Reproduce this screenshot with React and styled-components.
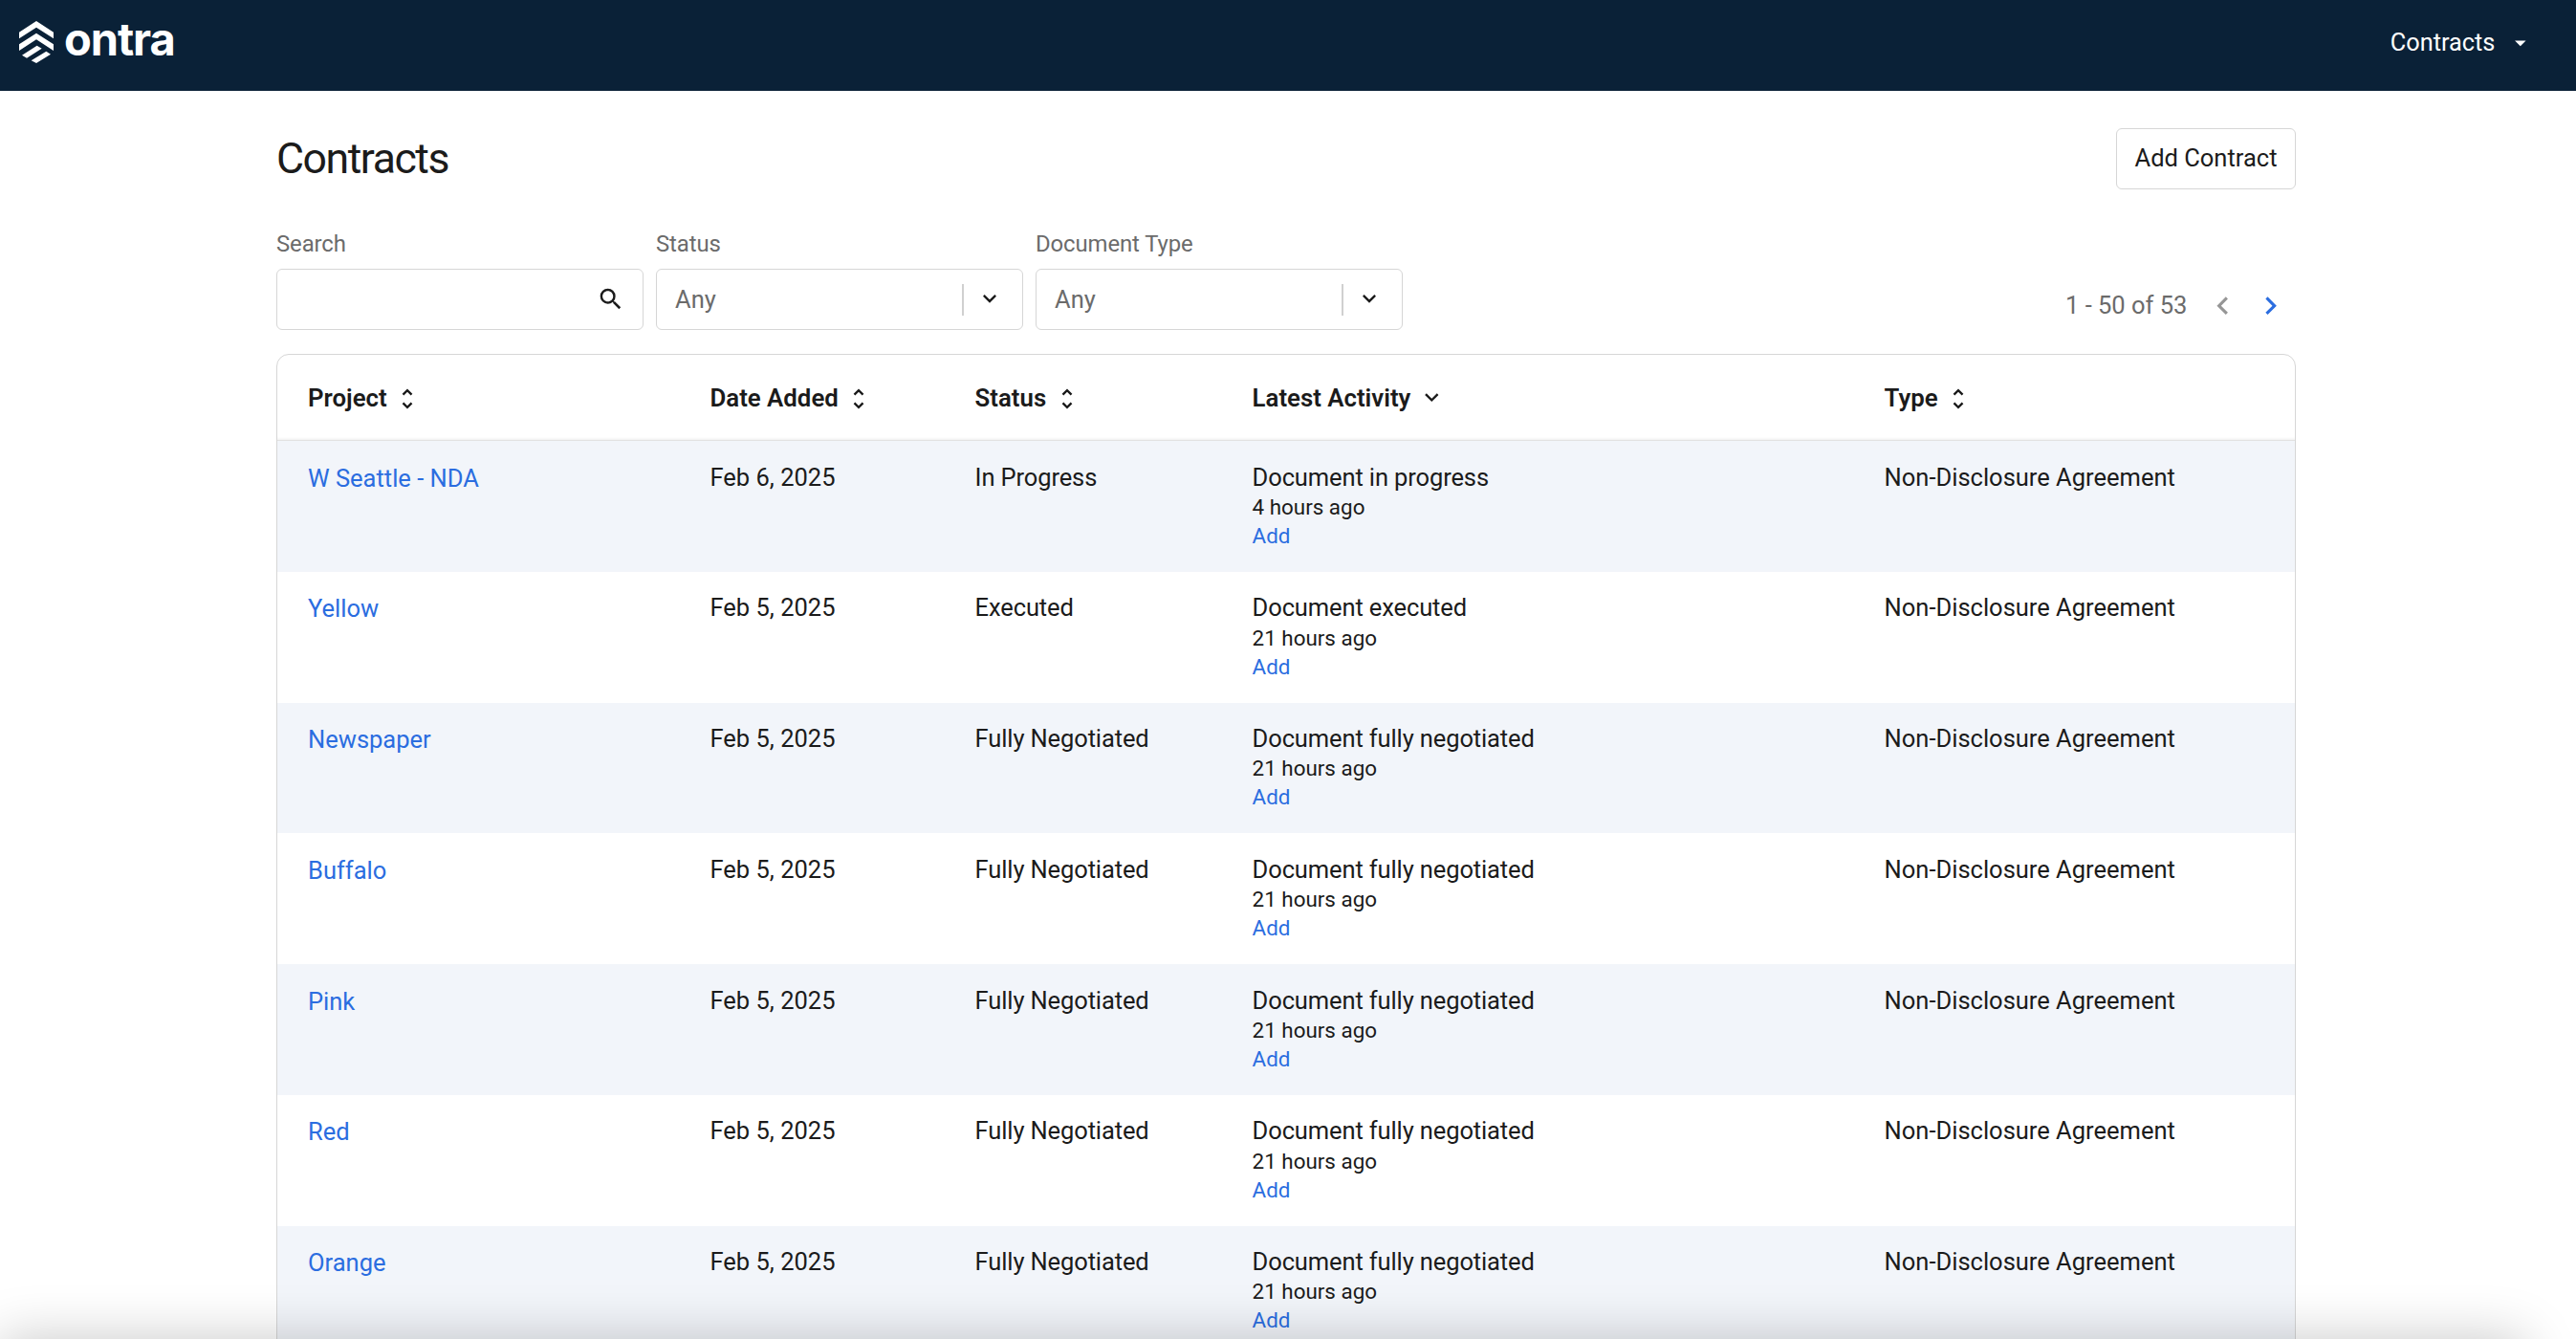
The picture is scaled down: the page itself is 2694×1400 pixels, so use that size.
import React from 'react'
import styled, { createGlobalStyle } from 'styled-components'
import {
  MdArrowDropDown,
  MdChevronLeft,
  MdChevronRight,
  MdExpandMore,
  MdSearch,
  MdUnfoldMore,
} from 'react-icons/md'

const columns = [
  { name: 'Project' },
  { name: 'Date Added' },
  { name: 'Status' },
  { name: 'Latest Activity', sorted: true },
  { name: 'Type' },
]

const negotiated = {
  date: 'Feb 5, 2025',
  status: 'Fully Negotiated',
  activity: 'Document fully negotiated',
  time: '21 hours ago',
}

const contracts = [
  {
    project: 'W Seattle - NDA',
    date: 'Feb 6, 2025',
    status: 'In Progress',
    activity: 'Document in progress',
    time: '4 hours ago',
  },
  {
    project: 'Yellow',
    date: 'Feb 5, 2025',
    status: 'Executed',
    activity: 'Document executed',
    time: '21 hours ago',
  },
  { project: 'Newspaper', ...negotiated },
  { project: 'Buffalo', ...negotiated },
  { project: 'Pink', ...negotiated },
  { project: 'Red', ...negotiated },
  { project: 'Orange', ...negotiated },
]

const Logo = () => (
  <Brand>
    <svg width='36' height='44' viewBox='0 0 108 132' fill='#fff'>
      <path d='M54 0L108 35V55L54 20L0 55V35Z' />
      <path d='M54 38L108 73V93L54 58L0 93V73Z' />
      <path d='M9 107L56 77L71 86L24 116Z' />
      <path d='M38 124L85 95L99 104L54 132Z' />
    </svg>
    <Wordmark>ontra</Wordmark>
  </Brand>
)

const SelectField = ({ label }) => (
  <Field>
    <Label>{label}</Label>
    <Control>
      <Value>Any</Value>
      <Divider />
      <SelectArrow />
    </Control>
  </Field>
)

const App = () => {
  return (
    <Page>
      <GlobalStyle />
      <Navbar>
        <Logo />
        <NavMenu>
          Contracts
          <MdArrowDropDown size={27.6} />
        </NavMenu>
      </Navbar>

      <Main>
        <TitleRow>
          <Title>Contracts</Title>
          <Button>Add Contract</Button>
        </TitleRow>

        <Toolbar>
          <Field>
            <Label>Search</Label>
            <Control>
              <SearchInput type='text' />
              <SearchIcon />
            </Control>
          </Field>
          <SelectField label='Status' />
          <SelectField label='Document Type' />
          <Pagination>
            <span>1 - 50 of 53</span>
            <PageButton disabled>
              <MdChevronLeft />
            </PageButton>
            <PageButton>
              <MdChevronRight />
            </PageButton>
          </Pagination>
        </Toolbar>

        <Table>
          <HeadRow>
            {columns.map(({ name, sorted }) => (
              <HeadCell key={name}>
                {name}
                {sorted ? <MdExpandMore size={28.6} /> : <SortIcon />}
              </HeadCell>
            ))}
          </HeadRow>
          {contracts.map((item) => (
            <Row key={item.project}>
              <ProjectLink>{item.project}</ProjectLink>
              <Cell>{item.date}</Cell>
              <Cell $tight>{item.status}</Cell>
              <Activity>
                <Cell $tight>{item.activity}</Cell>
                <Small>{item.time}</Small>
                <Small as='a' $link>
                  Add
                </Small>
              </Activity>
              <Cell>Non-Disclosure Agreement</Cell>
            </Row>
          ))}
        </Table>
      </Main>
      <BottomShade />
    </Page>
  )
}

const GlobalStyle = createGlobalStyle`
  * {
    box-sizing: border-box;
    margin: 0;
    padding: 0;
  }

  body {
    background: #fff;
    color: #1b1b1b;
    font-family: Roboto, sans-serif;
    font-size: 25.5px;
    line-height: 30px;
    overflow: hidden;
  }

  svg {
    flex-shrink: 0;
  }
`

const Page = styled.div`
  height: 100vh;
  overflow: hidden;
`

const Navbar = styled.header`
  display: flex;
  align-items: center;
  justify-content: space-between;
  height: 95px;
  padding: 0 44px 7px 20px;
  background: #0a2137;
  color: #fff;
`

const Brand = styled.div`
  display: flex;
  align-items: center;
  gap: 11px;
`

const Wordmark = styled.span`
  margin-bottom: 7px;
  font-family: Inter, sans-serif;
  font-size: 47px;
  font-weight: 700;
  letter-spacing: -1.1px;
  line-height: 44px;
`

const NavMenu = styled.div`
  display: flex;
  align-items: center;
  gap: 13px;
  padding-top: 2px;
  font-size: 25.3px;
  font-weight: 450;
`

const Main = styled.main`
  width: 2401px;
  padding: 39px 0 0 289px;
`

const TitleRow = styled.div`
  display: flex;
  align-items: center;
  justify-content: space-between;
`

const Title = styled.h1`
  font-size: 44.6px;
  font-weight: 400;
  letter-spacing: -1.45px;
  line-height: 52px;
`

const Button = styled.button`
  width: 188px;
  height: 64px;
  padding-bottom: 2px;
  border: 1px solid #d6d6d6;
  border-radius: 6px;
  background: #fff;
  color: inherit;
  font: inherit;
`

const Toolbar = styled.div`
  display: flex;
  align-items: flex-end;
  gap: 13px;
  margin-top: 43px;
`

const Field = styled.div`
  display: flex;
  flex-direction: column;
  gap: 12px;
  width: 384px;
`

const Label = styled.label`
  color: #6b6b6b;
  font-size: 23.9px;
  letter-spacing: -0.1px;
  line-height: 28px;
`

const Control = styled.div`
  display: flex;
  align-items: center;
  height: 64px;
  padding-left: 19px;
  border: 1px solid #d6d6d6;
  border-radius: 6px;
`

const SearchInput = styled.input`
  flex: 1;
  min-width: 0;
  border: none;
  outline: none;
  background: transparent;
  font: inherit;
`

const SearchIcon = styled(MdSearch)`
  width: 29.5px;
  height: 29.5px;
  margin-right: 19px;
`

const Value = styled.span`
  flex: 1;
  padding-bottom: 1px;
  color: #6b6b6b;
`

const Divider = styled.span`
  width: 2px;
  height: 33px;
  background: #d0d0d0;
`

const SelectArrow = styled(MdExpandMore)`
  width: 28px;
  height: 28px;
  margin: 0 20px 2px 13px;
`

const Pagination = styled.div`
  display: flex;
  align-items: center;
  margin-left: auto;
  padding: 0 8px 7px 0;
  color: #6b6b6b;

  span {
    margin-right: 19px;
  }
`

const PageButton = styled.button`
  display: flex;
  border: none;
  background: none;
  color: ${({ disabled }) => (disabled ? '#969696' : '#2b6de0')};
  font-size: 37.3px;

  & + & {
    margin-left: 12px;
  }
`

const Table = styled.div`
  margin-top: 25px;
  border: 1px solid #d6d6d6;
  border-radius: 13px;
  overflow: hidden;
`

const HeadRow = styled.div`
  display: grid;
  grid-template-columns: 420.5px 277.1px 290px 661px 1fr;
  align-items: center;
  height: 90px;
  padding-left: 32px;
  border-bottom: 1px solid #e2e2e2;
  box-shadow: inset 0 -3px 3px -2px rgba(0, 0, 0, 0.07);
`

const HeadCell = styled.div`
  display: flex;
  align-items: center;
  gap: 7.5px;
  font-size: 25.8px;
  font-weight: 600;
`

const SortIcon = styled(MdUnfoldMore)`
  width: 28px;
  height: 28px;
  margin-top: 2px;
`

const Row = styled.div`
  display: grid;
  grid-template-columns: 420.5px 277.1px 290px 661px 1fr;
  align-items: start;
  height: 136.75px;
  padding: 22.5px 0 0 32px;

  &:nth-child(even) {
    background: #f2f5fa;
  }
`

const Cell = styled.div`
  letter-spacing: ${({ $tight }) => ($tight ? '-0.12px' : 'normal')};
  line-height: 30px;
`

const ProjectLink = styled.a`
  margin-top: 1px;
  color: #2b6de0;
`

const Activity = styled.div`
  display: flex;
  flex-direction: column;

  ${Cell} {
    margin-bottom: 1.3px;
  }
`

const Small = styled.span`
  color: ${({ $link }) => ($link ? '#2b6de0' : 'inherit')};
  font-size: 22.4px;
  line-height: 30px;
`

// soft shadow rising from below the fold
const BottomShade = styled.div`
  position: fixed;
  top: 100%;
  left: 0;
  right: 54px;
  height: 120px;
  box-shadow: 0 0 56px rgba(0, 0, 0, 0.22);
  pointer-events: none;
`

export default App
